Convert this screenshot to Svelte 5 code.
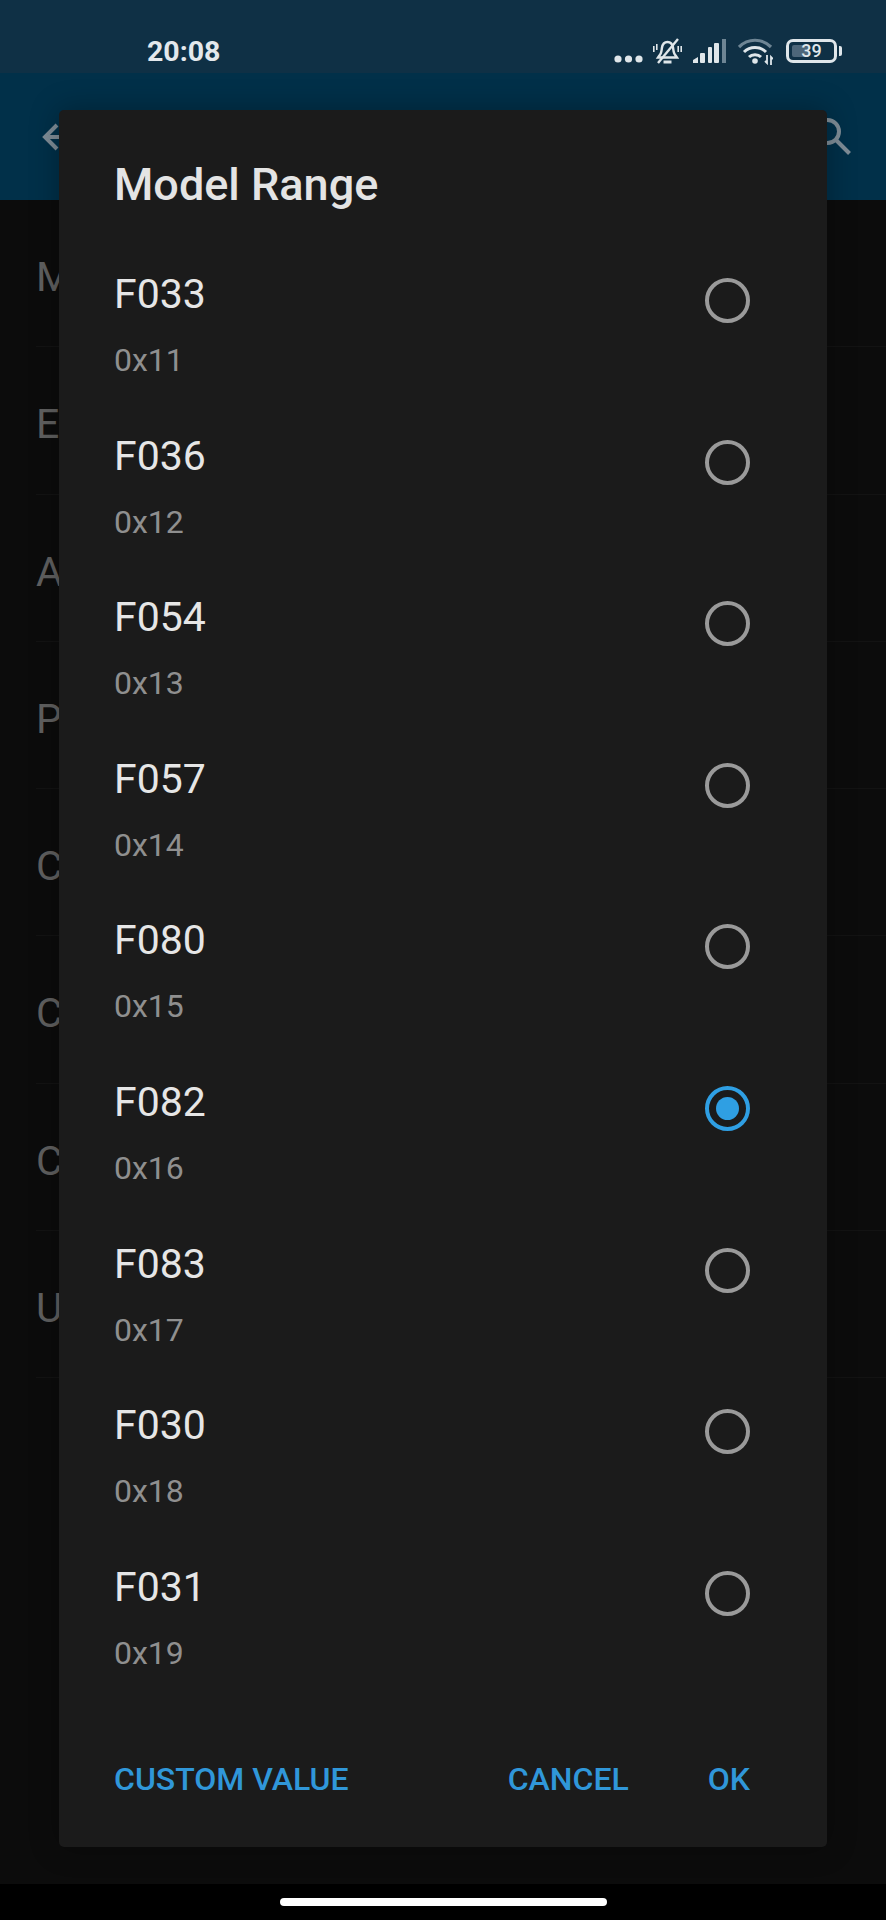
<script>
  const pages = ["M", "E", "A", "P", "C", "C", "C", "U"];
  const options = [
    { name: "F033", code: "0x11" },
    { name: "F036", code: "0x12" },
    { name: "F054", code: "0x13" },
    { name: "F057", code: "0x14" },
    { name: "F080", code: "0x15" },
    { name: "F082", code: "0x16" },
    { name: "F083", code: "0x17" },
    { name: "F030", code: "0x18" },
    { name: "F031", code: "0x19" }
  ];
  let selected = $state("F082");
</script>

<div class="screen">
  <div class="status">
    <span class="time">20:08</span>
    <div class="status-icons">
      <svg class="dots" width="29" height="8" viewBox="0 0 29 8"><circle cx="4" cy="4" r="3.6"/><circle cx="14.5" cy="4" r="3.6"/><circle cx="25" cy="4" r="3.6"/></svg>
      <svg class="bell" width="29" height="27" viewBox="0 0 29 27" fill="none" stroke="#dfe6ea" stroke-width="2.400">
        <path d="M6 18c2.500-2 2.500-5 2.900-8C9.500 6 11.500 4 14.500 4s5 2 5.600 6c.4 3 .4 6 2.900 8l1 1.500H5z"/>
        <path d="M10.500 24h8" stroke-width="3"/>
        <path d="M25 1 5 25"/>
        <path d="M.8 8v6M3.800 6v6M28.200 8v6M25.200 8v6" stroke-width="1.600"/>
      </svg>
      <svg width="33" height="24" viewBox="0 0 33 24">
        <path d="M0 24v-3l5-3v6z" fill="#dfe6ea"/>
        <rect x="7" y="14" width="5" height="10" rx="1" fill="#dfe6ea"/>
        <rect x="15" y="8" width="4" height="16" rx="1" fill="#dfe6ea"/>
        <rect x="21" y="4" width="5" height="20" rx="1" fill="#dfe6ea"/>
        <rect x="29" y="0" width="4" height="24" fill="#6e8594"/>
      </svg>
      <svg width="35" height="27" viewBox="0 0 35 27" fill="none">
        <path d="M1 9C10 0 24 0 33 9" stroke="#6e8594" stroke-width="3.200"/>
        <path d="M6 14C12 8 22 8 28 14" stroke="#dfe6ea" stroke-width="3"/>
        <path d="M11 19C14 16 20 16 23 19" stroke="#dfe6ea" stroke-width="3"/>
        <circle cx="17" cy="23" r="2.800" fill="#dfe6ea"/>
        <path d="M29 17v8l-2-2M33 27v-8l2 2" stroke="#dfe6ea" stroke-width="1.800"/>
      </svg>
      <div class="battery">
        <div class="cell"><div class="level"></div><span>39</span></div>
        <div class="cap"></div>
      </div>
    </div>
  </div>

  <div class="appbar">
    <svg width="30" height="30" viewBox="0 0 30 30" fill="none" stroke="#7f8d97" stroke-width="4"><path d="M28 15H4M15 3 3 15l12 12"/></svg>
    <svg width="37" height="37" viewBox="0 0 37 37" fill="none" stroke="#7f8d97" stroke-width="4"><circle cx="13.500" cy="13.500" r="11.500"/><path d="m22 22 13.500 13.500"/></svg>
  </div>

  <div class="rows">
    {#each pages as page}
      <div class="row">{page}</div>
    {/each}
  </div>

  <div class="navbar"><div class="pill"></div></div>

  <div class="dialog">
    <h2>Model Range</h2>
    <div class="options">
      {#each options as opt}
        <button class="option" onclick={() => (selected = opt.name)}>
          <div class="labels">
            <div class="name">{opt.name}</div>
            <div class="code">{opt.code}</div>
          </div>
          <span class="radio" class:on={selected === opt.name}></span>
        </button>
      {/each}
    </div>
    <div class="actions">
      <span class="action">CUSTOM VALUE</span>
      <span class="spacer"></span>
      <span class="action">CANCEL</span>
      <span class="action">OK</span>
    </div>
  </div>
</div>

<style>
  :global(body) {
    margin: 0;
    background: #000;
  }
  .screen {
    position: relative;
    width: 886px;
    height: 1920px;
    display: flex;
    flex-direction: column;
    overflow: hidden;
    background: #0c0c0c;
    font-family: Roboto, "Liberation Sans", sans-serif;
  }
  .status {
    height: 73px;
    flex: none;
    background: #0f3045;
    display: flex;
    align-items: center;
    justify-content: space-between;
    padding: 29px 44px 0 147px;
    box-sizing: border-box;
  }
  .time {
    color: #e3e8ec;
    font-size: 28.5px;
    font-weight: 700;
  }
  .status-icons {
    display: flex;
    align-items: center;
    gap: 12px;
  }
  .dots { fill: #dfe6ea; margin: 16px -2px 0 0; }
  .bell { margin-right: -1px; }
  .battery {
    display: flex;
    align-items: center;
    gap: 2px;
    margin-left: 1px;
  }
  .cell {
    position: relative;
    width: 51px;
    height: 24px;
    box-sizing: border-box;
    border: 3px solid #dfe6ea;
    border-radius: 7px;
    display: flex;
    align-items: center;
    justify-content: center;
  }
  .level {
    position: absolute;
    left: 3px;
    top: 3px;
    bottom: 3px;
    width: 17px;
    background: #4d6679;
    border-radius: 2px;
  }
  .cell span {
    position: relative;
    color: #dfe6ea;
    font-size: 18px;
    line-height: 18px;
    font-weight: 500;
  }
  .cap {
    width: 3px;
    height: 10px;
    background: #dfe6ea;
    border-radius: 0 2px 2px 0;
  }
  .appbar {
    height: 127px;
    flex: none;
    background: #013049;
    display: flex;
    align-items: center;
    justify-content: space-between;
    padding: 0 35px 0 42px;
    box-sizing: border-box;
  }
  .rows {
    flex: 1;
    padding-left: 36px;
  }
  .row {
    height: 147.3px;
    padding-top: 53px;
    box-sizing: border-box;
    border-bottom: 1px solid #131313;
    color: #606060;
    font-size: 41px;
    line-height: 48px;
  }
  .navbar {
    height: 36px;
    flex: none;
    background: #000;
    display: flex;
    justify-content: center;
    padding-top: 14px;
    box-sizing: border-box;
  }
  .pill {
    width: 327px;
    height: 8px;
    border-radius: 4px;
    background: #fff;
  }
  .dialog {
    position: absolute;
    left: 59px;
    top: 110px;
    width: 768px;
    height: 1737px;
    box-sizing: border-box;
    background: #1b1b1b;
    border-radius: 5px;
    display: flex;
    flex-direction: column;
    padding: 0 77px 0 55px;
    box-shadow: 0 0 30px rgba(0, 0, 0, 0.3);
  }
  h2 {
    margin: 49px 0 0;
    height: 52px;
    line-height: 52px;
    color: #e4e4e4;
    font-size: 45px;
    font-weight: 500;
  }
  .options {
    margin-top: 51px;
    display: flex;
    flex-direction: column;
  }
  .option {
    all: unset;
    height: 161.6px;
    display: flex;
    align-items: flex-start;
    justify-content: space-between;
  }
  .name {
    color: #e6e6e6;
    font-size: 41px;
    line-height: 48px;
    margin-top: 8px;
  }
  .code {
    color: #8f8f8f;
    font-size: 32px;
    line-height: 40px;
    margin-top: 22px;
  }
  .radio {
    width: 45px;
    height: 45px;
    box-sizing: border-box;
    border: 4px solid #9a9a9a;
    border-radius: 50%;
    margin-top: 16px;
    display: flex;
    align-items: center;
    justify-content: center;
  }
  .radio.on { border-color: #2f9fe3; }
  .radio.on::after {
    content: "";
    width: 23px;
    height: 23px;
    border-radius: 50%;
    background: #2f9fe3;
  }
  .actions {
    position: absolute;
    left: 55px;
    right: 77px;
    bottom: 46px;
    display: flex;
    gap: 79px;
    color: #3097d9;
    font-size: 32px;
    font-weight: 500;
    line-height: 44px;
  }
  .spacer { flex: 1; margin-right: -79px; }
</style>
